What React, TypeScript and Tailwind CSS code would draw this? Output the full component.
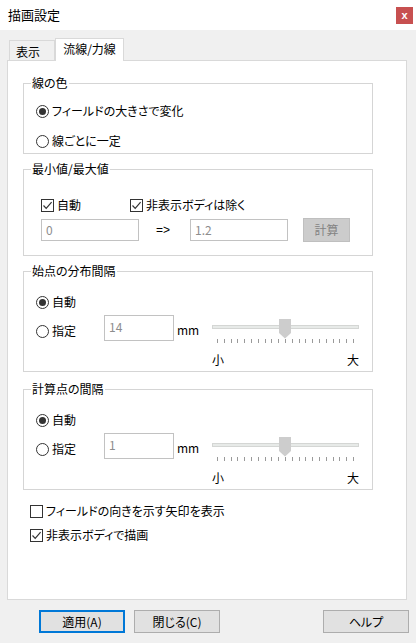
import React from 'react';

type ItemProps = { checked?: boolean; label: string };

const Radio: React.FC<ItemProps> = ({ checked, label }) => (
  <div className="flex h-[20px] items-center">
    <span className="flex h-[13px] w-[13px] items-center justify-center rounded-full border border-[#333333] bg-white">
      {checked && <span className="h-[7px] w-[7px] rounded-full bg-[#333333]" />}
    </span>
    <span className="ml-[3px] leading-[16px]">{label}</span>
  </div>
);

const Check: React.FC<ItemProps> = ({ checked, label }) => (
  <div className="flex h-[20px] items-center">
    <span className="flex h-[13px] w-[13px] items-center justify-center border border-[#333333] bg-white">
      {checked && (
        <svg width="11" height="11" viewBox="0 0 11 11">
          <path d="M1.5 5.5 L4.2 8.3 L9.6 2.2" fill="none" stroke="#333333" strokeWidth="1.2" />
        </svg>
      )}
    </span>
    <span className="ml-[3px] leading-[16px]">{label}</span>
  </div>
);

const Slider: React.FC = () => (
  <div className="mt-[4px] flex w-[147px] flex-col">
    {/* track + thumb */}
    <div className="relative h-[20px]">
      <div className="mt-[6px] h-[4px] w-full border border-[#d4d6d4] bg-[#e7eae8]" />
      <svg className="absolute left-[67px] top-0" width="12" height="20" viewBox="0 0 12 20">
        <path d="M0 0 H12 V14 L6 19.5 L0 14 Z" fill="#cdcdcd" />
      </svg>
    </div>
    <div className="flex h-[4px] justify-between px-[5px]">
      {Array.from({ length: 21 }).map((_, i) => (
        <span key={i} className="h-[4px] w-px bg-[#9a9a9a]" />
      ))}
    </div>
    <div className="mt-[9px] flex h-[16px] justify-between leading-[16px]">
      <span>小</span>
      <span>大</span>
    </div>
  </div>
);

const Group: React.FC<{ title: string; className?: string; children: React.ReactNode }> = ({
  title,
  className = '',
  children,
}) => (
  <fieldset className={`ml-[15px] w-[350px] border border-[#d5d5d5] ${className}`}>
    <legend className="ml-[7px] px-[1px] leading-[16px]">{title}</legend>
    {children}
  </fieldset>
);

const SpacingGroup: React.FC<{ title: string; value: string; className?: string }> = ({ title, value, className }) => (
  <Group title={title} className={className}>
    <div className="pb-[3px] pl-[12px] pt-[13px]">
      <Radio checked label="自動" />
      <div className="mt-[3px] flex items-start">
        <div className="mt-[6px] w-[68px]">
          <Radio label="指定" />
        </div>
        <div className="h-[26px] w-[70px] border border-[#c2c2c2] bg-white pl-[4px] pt-[3px] leading-[16px] text-[#8d8d8d]">
          {value}
        </div>
        <div className="ml-[3px] mt-[5px] w-[35px] leading-[20px]">mm</div>
        <Slider />
      </div>
    </div>
  </Group>
);

export default function App() {
  return (
    <div className="flex h-[643px] w-[416px] flex-col overflow-hidden bg-[#f0f0f0] font-['Noto_Sans_CJK_JP','Liberation_Sans',sans-serif] text-[12px] text-black [font-feature-settings:'palt']">
      {/* Title bar */}
      <div className="flex h-[30px] items-start bg-white">
        <span className="ml-[8px] self-center leading-[16px] text-[13px]">描画設定</span>
        <div className="ml-auto mr-[3px] mt-[7px] flex h-[17px] w-[17px] items-center justify-center bg-[#c75050] font-['Liberation_Sans',sans-serif] text-[11px] font-bold leading-none text-white">
          x
        </div>
      </div>

      {/* Tabs */}
      <div className="flex h-[30px] items-end pt-[8px]">
        <div className="ml-[9px] flex h-[20px] w-[46px] items-center border-l border-r border-t border-[#d9d9d9] bg-[#f0f0f0] pl-[6px] pt-[2px] leading-[16px]">
          表示
        </div>
        <div className="relative z-10 -mb-px flex h-[23px] w-[69px] items-center justify-center border-l border-r border-t border-[#d9d9d9] bg-white pb-[2px] leading-[16px]">
          流線/力線
        </div>
      </div>

      {/* Panel */}
      <div className="ml-[7px] h-[540px] w-[400px] border border-[#d9d9d9] bg-white">
        <Group title="線の色" className="mt-[14px]">
          <div className="pb-[2px] pl-[12px] pt-[10px]">
            <Radio checked label="フィールドの大きさで変化" />
            <div className="mt-[10px]">
              <Radio label="線ごとに一定" />
            </div>
          </div>
        </Group>

        <Group title="最小値/最大値" className="mt-[7px]">
          <div className="pb-[13px] pl-[17px] pt-[18px]">
            <div className="flex">
              <div className="w-[89px]">
                <Check checked label="自動" />
              </div>
              <Check checked label="非表示ボディは除く" />
            </div>
            <div className="mt-[3px] flex h-[24px] items-center">
              <div className="flex h-[22px] w-[98px] items-center border border-[#c2c2c2] pl-[4px] text-[#8d8d8d]">0</div>
              <div className="ml-[17px] w-[34px] font-['Liberation_Sans',sans-serif]">=&gt;</div>
              <div className="flex h-[22px] w-[98px] items-center border border-[#c2c2c2] pl-[4px] text-[#8d8d8d]">1.2</div>
              <div className="ml-[15px] flex h-[24px] w-[47px] items-center justify-center border border-[#bfbfbf] bg-[#cccccc] text-[#838383]">
                計算
              </div>
            </div>
          </div>
        </Group>

        <SpacingGroup title="始点の分布間隔" value="14" className="mt-[7px]" />
        <SpacingGroup title="計算点の間隔" value="1" className="mt-[9px]" />

        <div className="ml-[22px] mt-[11px]">
          <Check label="フィールドの向きを示す矢印を表示" />
          <div className="mt-[4px]">
            <Check checked label="非表示ボディで描画" />
          </div>
        </div>
      </div>

      {/* Buttons */}
      <div className="mt-[10px] flex">
        <button className="ml-[39px] flex h-[23px] w-[86px] items-center justify-center border-2 border-[#0078d7] bg-[#e1e1e1]">
          適用(A)
        </button>
        <button className="ml-[9px] flex h-[23px] w-[86px] items-center justify-center border border-[#adadad] bg-[#e1e1e1]">
          閉じる(C)
        </button>
        <button className="ml-auto mr-[7px] flex h-[23px] w-[86px] items-center justify-center border border-[#adadad] bg-[#e1e1e1]">
          ヘルプ
        </button>
      </div>
    </div>
  );
}
